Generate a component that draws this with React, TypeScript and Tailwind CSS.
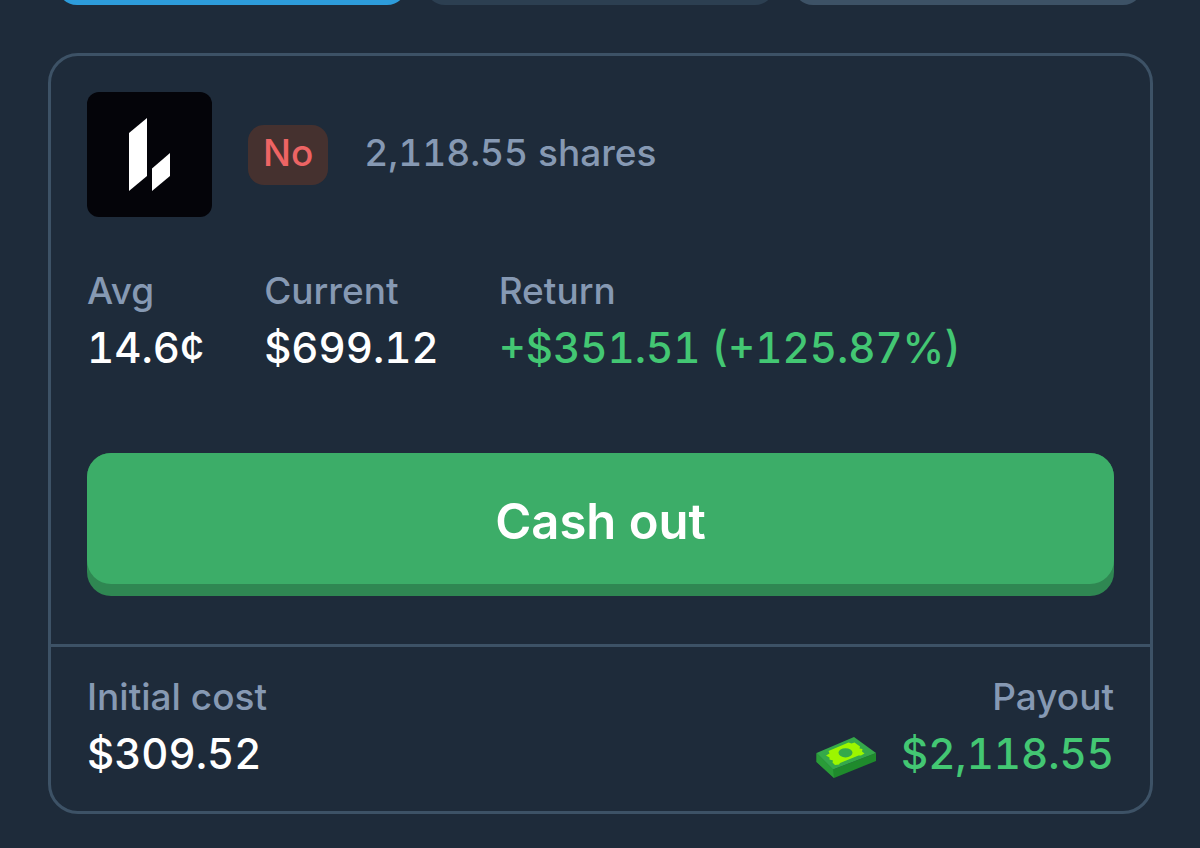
import type { ReactNode } from "react";

type StatProps = {
  label: string;
  children: ReactNode;
  positive?: boolean;
  alignEnd?: boolean;
};

function Stat({ label, children, positive = false, alignEnd = false }: StatProps) {
  return (
    <div className={alignEnd ? "flex flex-col items-end" : "flex flex-col items-start"}>
      <dt className="text-[37px] leading-[48px] font-medium text-[#8699b3]">{label}</dt>
      <dd
        className={
          positive
            ? "flex items-center gap-6 text-[42px] leading-[66px] font-medium text-[#43c773] tabular-nums"
            : "flex items-center gap-6 text-[42px] leading-[66px] font-medium text-white tabular-nums"
        }
      >
        {children}
      </dd>
    </div>
  );
}

function MarketLogo() {
  return (
    <svg viewBox="0 0 125 125" className="size-[125px] shrink-0 rounded-xl bg-[#040409]" role="img" aria-label="Market">
      <path d="M42 41 60 26V84L42 99Z" fill="#fff" />
      <path d="M65 76.500 83 61V84L65 99Z" fill="#fff" />
    </svg>
  );
}

function CashIcon() {
  return (
    <svg viewBox="0 0 62 44" className="mt-1.5 h-11 w-[62px] shrink-0" aria-hidden="true">
      <path d="M1.500 18 18 34.500 61 18V26L19 43 1.500 27Z" fill="#1f8a2c" />
      <path d="M1.500 18 18 34.500 19 43 1.500 27Z" fill="#2a9c38" />
      <path d="M1.500 18 39 2 61 18 18 34.500Z" fill="#35a94a" />
      <path
        d="M11 20.500 14.500 18.500 13.500 16 33.500 7.500 36.500 8.500 39.500 7.500 45 11.500 44.500 13.500 47.500 14 47 16.500 49.500 18.500 46 20.500 43.500 20.500 25 28 24 29.500 20 30 17.500 27.500 18 25.500 14.500 24.500 14.500 22.500Z"
        fill="#9cf600"
      />
      <ellipse cx="30.500" cy="17.800" rx="7" ry="4.600" fill="#35a94a" />
    </svg>
  );
}

export default function App() {
  return (
    <div className="min-h-screen bg-[#1e2b3a] font-[Inter,sans-serif]">
      <nav className="flex h-[5px] items-end gap-[18px] overflow-hidden px-[57px]" aria-label="Order options">
        <button type="button" aria-label="First" className="h-16 flex-1 rounded-[20px] bg-[#2d9cdb]" />
        <button type="button" aria-label="Second" className="h-16 flex-1 rounded-[20px] bg-[#2c3f51]" />
        <button type="button" aria-label="Third" className="h-16 flex-1 rounded-[20px] bg-[#3d5266]" />
      </nav>

      <main className="pt-12 pr-[47px] pb-8 pl-12">
        <section className="rounded-[30px] border-[3px] border-[#3d5266]">
          <div className="px-9 pt-9 pb-12">
            <header className="flex items-center gap-9">
              <MarketLogo />
              <span className="rounded-2xl bg-[#45312f] px-[15px] pt-1 pb-2 text-[37px] leading-[48px] font-medium text-[#ed6464]">
                No
              </span>
              <p className="pb-1 text-[37px] leading-[48px] font-medium text-[#8699b3] tabular-nums">2,118.55 shares</p>
            </header>

            <dl className="mt-[50px] flex gap-[60px]">
              <Stat label="Avg">14.6¢</Stat>
              <Stat label="Current">$699.12</Stat>
              <Stat label="Return" positive>
                +$351.51 (+125.87%)
              </Stat>
            </dl>

            <button
              type="button"
              className="mt-[72px] block w-full rounded-3xl bg-[#2f8752] pb-3 text-[49px] font-semibold text-white"
            >
              <span className="block rounded-3xl bg-[#3cad68] pt-1.5 leading-[125px]">Cash out</span>
            </button>
          </div>

          <dl className="flex justify-between border-t-[3px] border-[#3d5266] px-9 pt-[26px] pb-6">
            <Stat label="Initial cost">$309.52</Stat>
            <Stat label="Payout" positive alignEnd>
              <CashIcon />
              $2,118.55
            </Stat>
          </dl>
        </section>
      </main>
    </div>
  );
}
